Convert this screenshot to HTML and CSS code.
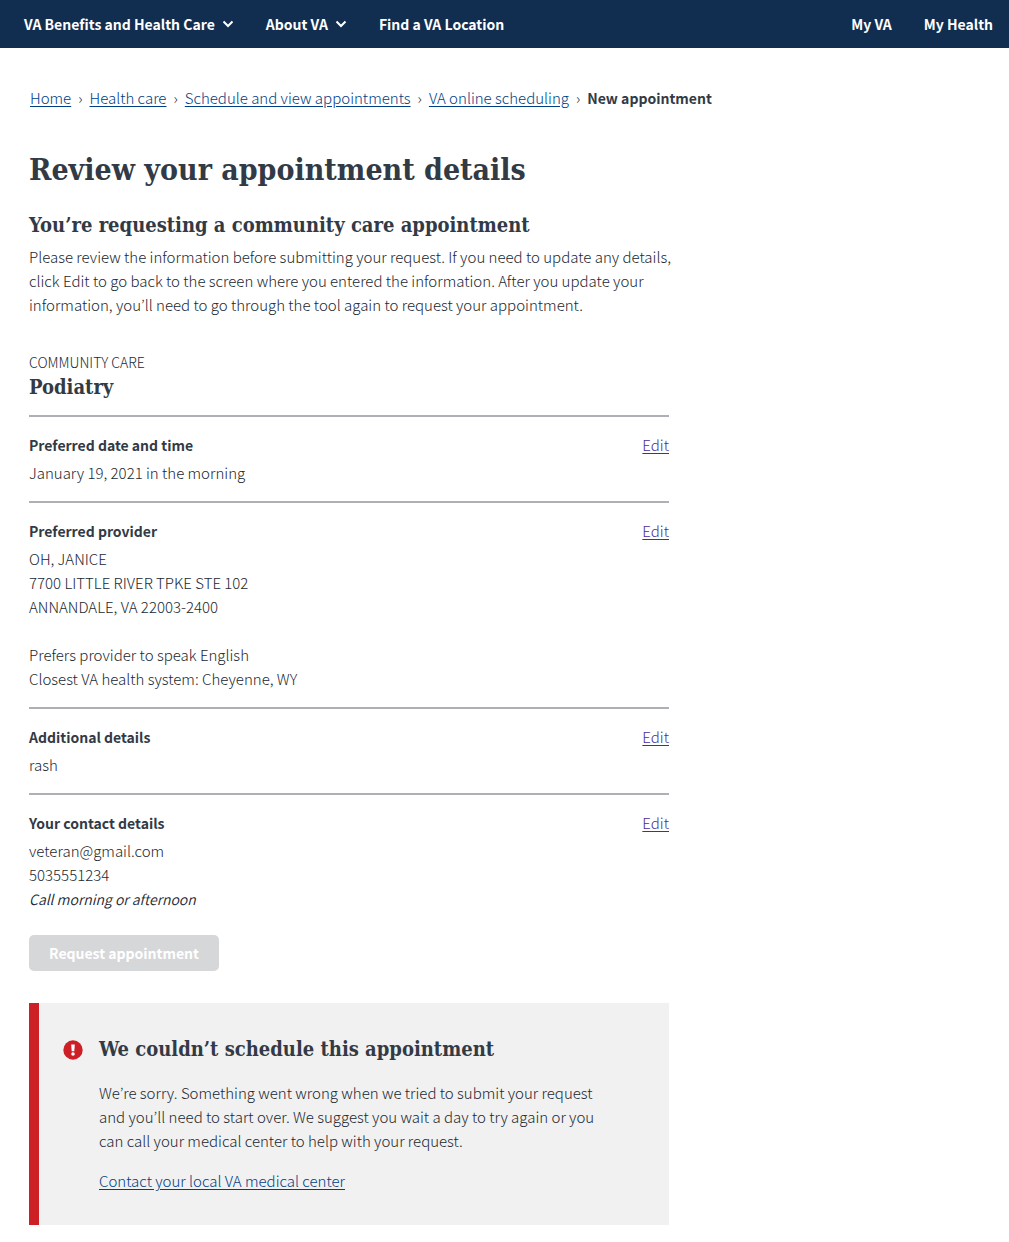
FILE: index.html
```html
<!DOCTYPE html>
<html lang="en">
<head>
<meta charset="utf-8">
<meta name="viewport" content="width=device-width, initial-scale=1">
<title>Review your appointment details</title>
<link rel="stylesheet" href="styles.css">
</head>
<body>
<header class="topbar">
  <nav class="topnav" aria-label="Main">
    <button type="button" class="nav-item">VA Benefits and Health Care
      <svg class="chevron" viewBox="0 0 12 8" aria-hidden="true"><path d="M1.5 1.5L6 6l4.5-4.5"/></svg>
    </button>
    <button type="button" class="nav-item">About VA
      <svg class="chevron" viewBox="0 0 12 8" aria-hidden="true"><path d="M1.5 1.5L6 6l4.5-4.5"/></svg>
    </button>
    <a class="nav-item" href="#">Find a VA Location</a>
  </nav>
  <nav class="usernav" aria-label="Account">
    <a class="nav-item" href="#">My VA</a>
    <a class="nav-item" href="#">My Health</a>
  </nav>
</header>

<nav class="breadcrumbs" aria-label="Breadcrumb">
  <ol class="crumbs">
    <li class="crumb"><a href="#">Home</a></li>
    <li class="crumb"><a href="#">Health care</a></li>
    <li class="crumb"><a href="#">Schedule and view appointments</a></li>
    <li class="crumb"><a href="#">VA online scheduling</a></li>
    <li class="crumb current" aria-current="page">New appointment</li>
  </ol>
</nav>

<main class="content">
  <h1 class="page-title">Review your appointment details</h1>
  <h2 class="heading">You’re requesting a community care appointment</h2>
  <p class="intro">Please review the information before submitting your request. If you need to update any details, click Edit to go back to the screen where you entered the information. After you update your information, you’ll need to go through the tool again to request your appointment.</p>

  <p class="eyebrow">Community care</p>
  <h2 class="heading care-type">Podiatry</h2>

  <section class="detail">
    <div class="detail-head"><h3 class="detail-title">Preferred date and time</h3><a class="edit" href="#">Edit</a></div>
    <p>January 19, 2021 in the morning</p>
  </section>
  <section class="detail">
    <div class="detail-head"><h3 class="detail-title">Preferred provider</h3><a class="edit" href="#">Edit</a></div>
    <p>OH, JANICE<br>7700 LITTLE RIVER TPKE STE 102<br>ANNANDALE, VA 22003-2400</p>
    <p class="preferences">Prefers provider to speak English<br>Closest VA health system: Cheyenne, WY</p>
  </section>
  <section class="detail">
    <div class="detail-head"><h3 class="detail-title">Additional details</h3><a class="edit" href="#">Edit</a></div>
    <p>rash</p>
  </section>
  <section class="detail">
    <div class="detail-head"><h3 class="detail-title">Your contact details</h3><a class="edit" href="#">Edit</a></div>
    <p>veteran@gmail.com<br>5035551234</p>
    <p class="call-time">Call morning or afternoon</p>
  </section>

  <button type="button" class="submit" disabled>Request appointment</button>

  <div class="alert" role="alert">
    <svg class="alert-icon" viewBox="0 0 20 20" aria-hidden="true">
      <circle cx="10" cy="10" r="9.7" fill="#cd2026"/>
      <path d="M8.2 4.6h3.6l-.5 6.6H8.7z" fill="#fff"/>
      <circle cx="10" cy="14" r="1.8" fill="#fff"/>
    </svg>
    <div class="alert-body">
      <h2 class="heading">We couldn’t schedule this appointment</h2>
      <p class="alert-text">We’re sorry. Something went wrong when we tried to submit your request and you’ll need to start over. We suggest you wait a day to try again or you can call your medical center to help with your request.</p>
      <a href="#">Contact your local VA medical center</a>
    </div>
  </div>
</main>
</body>
</html>
```
FILE: styles.css
```css
* {
  box-sizing: border-box;
}

body {
  margin: 0;
  background: #fff;
  color: #212831;
  font-family: "Noto Sans CJK JP", "Noto Sans", sans-serif;
  font-size: 15px;
  font-weight: 300;
  line-height: 24px;
}

h1, h2, h3, p, ol {
  margin: 0;
  padding: 0;
}

a {
  color: #003e85;
  text-underline-offset: 2px;
}

.topbar {
  display: flex;
  justify-content: space-between;
  min-height: 48px;
  padding: 0 16px 0 24px;
  background: #112e51;
}

.topnav,
.usernav {
  display: flex;
  align-items: center;
  gap: 32px;
}

.nav-item {
  display: flex;
  align-items: center;
  gap: 7px;
  padding: 0;
  border: 0;
  background: none;
  color: #fff;
  font: inherit;
  font-size: 14px;
  font-weight: 700;
  text-decoration: none;
}

.chevron {
  width: 12px;
  height: 8px;
  fill: none;
  stroke: #fff;
  stroke-width: 2;
}

.breadcrumbs {
  padding: 38px 30px 0;
}

.crumbs {
  display: flex;
  flex-wrap: wrap;
  list-style: none;
}

.crumb:not(.current)::after {
  content: "›";
  padding: 0 7px;
}

.current {
  color: #323a45;
  font-size: 14px;
  font-weight: 700;
}

.content {
  max-width: 698px;
  padding: 40px 29px 17px;
}

.page-title,
.heading {
  color: #323a45;
  font-family: "DejaVu Serif Condensed", "DejaVu Serif", serif;
  font-weight: 700;
}

.page-title {
  margin-bottom: 22px;
  font-size: 30px;
  line-height: 40px;
}

.heading {
  font-size: 20px;
  line-height: 26px;
}

.intro {
  margin: 7px -8px 33px 0;
}

.eyebrow {
  font-size: 14px;
  text-transform: uppercase;
}

.care-type {
  margin-bottom: 15px;
}

.detail {
  padding: 16px 0;
  border-top: 2px solid #aeb0b5;
}

.detail-head {
  display: flex;
  justify-content: space-between;
  margin-bottom: 4px;
}

.detail-title {
  color: #323a45;
  font-size: 14px;
  font-weight: 700;
}

.edit {
  color: #4c2c92;
}

.preferences {
  margin-top: 24px;
}

.call-time {
  font-size: 14px;
  font-style: italic;
  font-weight: 350;
}

.submit {
  margin: 8px 0 32px;
  padding: 6px 20px;
  border: 0;
  border-radius: 5px;
  background: #d6d7d9;
  color: #fff;
  font: inherit;
  font-size: 14px;
  font-weight: 700;
}

.alert {
  display: flex;
  gap: 16px;
  padding: 33px 72px 32px 24px;
  border-left: 10px solid #cd2026;
  background: #f1f1f1;
}

.alert-icon {
  flex: none;
  width: 20px;
  height: 20px;
  margin-top: 4px;
}

.alert-text {
  margin: 19px 0 16px;
}
```
